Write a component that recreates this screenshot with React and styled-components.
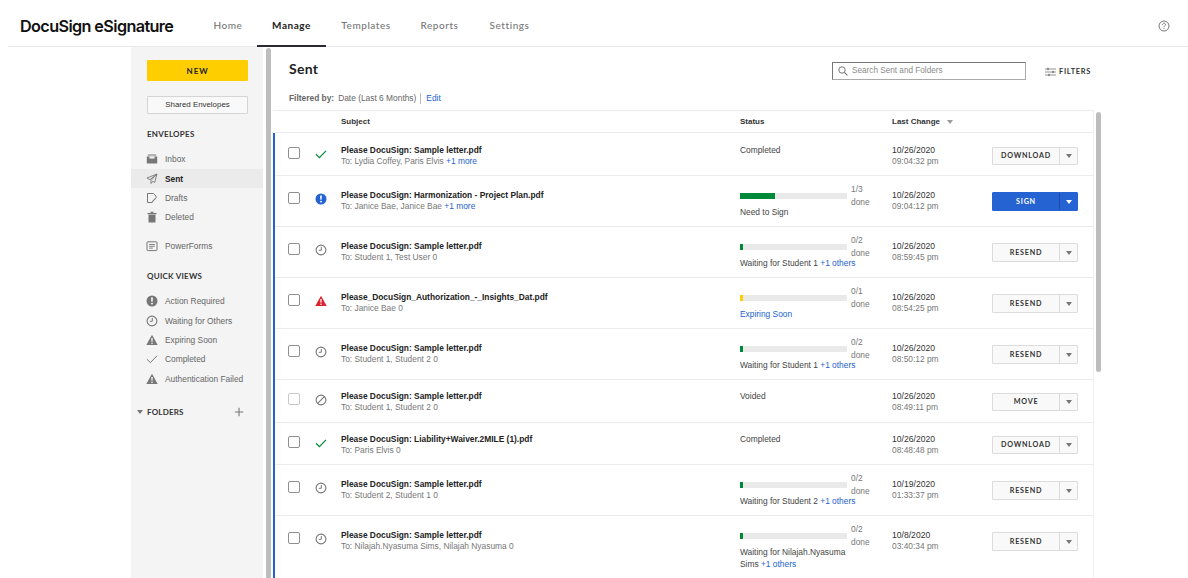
import React from "react";
import styled, { createGlobalStyle } from "styled-components";

const Global = createGlobalStyle`
  html, body { margin: 0; padding: 0; background: #fff; }
  body { font-family: "Liberation Sans", Arial, sans-serif; color: #222; }
  * { box-sizing: border-box; }
`;
const Page = styled.div`height: 578px; overflow: hidden; display: flex; flex-direction: column;`;
const Header = styled.header`
  height: 47px; margin-left: 8px; flex: none; display: flex; align-items: stretch;
  border-bottom: 1px solid #e9e9e9; padding: 0 18px 0 12px; position: relative;
`;
const Logo = styled.div`
  font: 600 16.2px/53px Inter, sans-serif; letter-spacing: -0.6px; color: #111; width: 179px; white-space: nowrap;
  height: 47px;
`;
const NavItem = styled.div`
  height: 47px; margin-bottom: -1px;
  font: ${p => (p.$active ? 700 : 500)} 10px/50px Lato, sans-serif; letter-spacing: 0.55px;
  color: ${p => (p.$active ? "#222" : "#777")};
  border-bottom: 2px solid ${p => (p.$active ? "#2a2a33" : "transparent")};
  width: ${p => p.$w}px; text-align: center; white-space: nowrap;
`;
const Help = styled.div`margin-left: auto; align-self: center; display: flex; margin-top: 5px;`;
const Body = styled.div`flex: 1; display: flex; padding-left: 131px; min-height: 0;`;
const Sidebar = styled.aside`
  width: 132px; flex: none; background: #f4f4f4; padding: 13px 15px 0 16px; position: relative;
`;
const NewBtn = styled.div`
  height: 21px; width: 101px; background: #ffce00; border-radius: 1px; text-align: center;
  font: 700 8px/22px Lato, sans-serif; letter-spacing: 0.9px; color: #222;
`;
const SharedBtn = styled.div`
  height: 18px; width: 101px; margin-top: 15px; background: #f9f9f9; border: 1px solid #d5d5d5; border-radius: 1px;
  text-align: center; font: 400 7.9px/16px "Liberation Sans", sans-serif; color: #333;
`;
const SideHeading = styled.div`
  font: 700 8px/10px Lato, sans-serif; letter-spacing: 0.25px; color: #333; margin-top: ${p => p.$mt}px;
`;
const SideList = styled.div`margin: ${p => p.$mt}px -15px 0 -16px;`;
const SideItem = styled.div`
  height: ${p => p.$h || 19.4}px; display: flex; align-items: center; gap: 7px; padding-left: 15px;
  font: ${p => (p.$active ? 700 : 400)} 8.4px/10px "Liberation Sans", sans-serif;
  color: ${p => (p.$active ? "#222" : "#666")};
  background: ${p => (p.$active ? "#ebebeb" : "transparent")};
  margin-top: ${p => p.$mt || 0}px;
`;
const Folders = styled.div`display: flex; align-items: center; margin: 18.5px 0 0 -10px;`;
const FoldersLabel = styled.span`font: 700 8px/10px Lato, sans-serif; letter-spacing: 0.2px; color: #333; margin-left: 4px;`;
const Plus = styled.span`margin-left: auto; display: flex; margin-right: 4px;`;
const Caret = styled.span`
  width: 0; height: 0; border-left: 3px solid transparent; border-right: 3px solid transparent;
  border-top: 4px solid ${p => p.$c || "#777"}; display: inline-block;
`;
const Scroll = styled.div`width: 5px; background: #bdbdbd; border-radius: 3px; flex: none; margin: ${p => p.$m}; height: ${p => p.$h};`;
const Main = styled.main`width: 821px; flex: none; margin-left: 2px; display: flex; flex-direction: column;`;
const MainTop = styled.div`height: 64px; flex: none; padding: 13px 0 0 16px; border-bottom: 1px solid #ebebeb; position: relative;`;
const TitleRow = styled.div`display: flex; align-items: flex-start;`;
const Title = styled.h1`margin: 0; font: 700 14px/17px Lato, sans-serif; letter-spacing: 0.3px; color: #222;`;
const Search = styled.div`
  margin-left: auto; width: 194px; height: 18px; margin-top: 2px; border: 1px solid #777; border-bottom-color: #aaa; border-right-color: #aaa;
  display: flex; align-items: center; gap: 4px; padding-left: 5px;
  font: 400 8.2px/10px "Liberation Sans", sans-serif; color: #8a8a8a;
`;
const Filters = styled.div`
  width: 68px; margin-top: 4px; padding-left: 19px; height: 16px; display: flex; align-items: center; gap: 3px;
  font: 700 7.4px/10px Lato, sans-serif; letter-spacing: 0.7px; color: #333;
`;
const Filtered = styled.div`margin-top: 13px; display: flex; align-items: center; font: 400 8.4px/11px "Liberation Sans", sans-serif; color: #666;`;
const FilteredLabel = styled.b`font-weight: 700; color: #666; margin-right: 4px;`;
const Edit = styled.a`color: #2463d1; border-left: 1px solid #bbb; margin-left: 4px; padding-left: 5px;`;
const Table = styled.div`flex: 1; border-right: 1px solid #f0f0f0; min-height: 0;`;
const cols = "66px 399px 152px 100px 86px";
const HeadRow = styled.div`
  height: 22px; display: grid; grid-template-columns: ${cols}; margin-left: 2px; align-items: center;
  border-bottom: 1px solid #ebebeb; font: 700 8px/10px "Liberation Sans", sans-serif; color: #333;
`;
const HeadCell = styled.div`grid-column: ${p => p.$col}; display: flex; align-items: center; gap: 7px;`;
const Row = styled.div`
  height: ${p => p.$h}px; display: grid; grid-template-columns: ${cols}; align-items: start;
  border-left: 2px solid #2463d1; padding-top: ${p => p.$pad}px;
  box-shadow: inset 0 -1px 0 #ebebeb;
`;
const Lead = styled.div`display: flex; align-items: center; padding-left: 13px; gap: 15px; margin-top: 1.5px;`;
const Check = styled.span`
  width: 12px; height: 12px; border: 1px solid ${p => (p.$off ? "#c9c9c9" : "#8f8f8f")}; border-radius: 2px; background: #fff; flex: none;
`;
const StateIcon = styled.span`display: flex; width: 12px; height: 12px; margin-top: 2px; flex: none;`;
const Subject = styled.div`font: 700 8.4px/11px "Liberation Sans", sans-serif; color: #222; white-space: nowrap;`;
const Sub = styled.div`font: 400 8.4px/11px "Liberation Sans", sans-serif; color: #777; white-space: nowrap;`;
const Link = styled.a`color: #2463d1;`;
const PlainStatus = styled.div`font: 400 8.4px/11px "Liberation Sans", sans-serif; color: #444;`;
const StatusBox = styled.div`margin-top: -7px; width: 124px;`;
const ProgressLine = styled.div`display: flex; align-items: center;`;
const Track = styled.div`width: 107px; height: 6px; background: #e9e9e9; flex: none;`;
const Fill = styled.div`height: 100%; background: ${p => p.$c};`;
const Count = styled.div`width: 17px; margin-left: 4px; font: 400 8.4px/13px "Liberation Sans", sans-serif; color: #777;`;
const StatusText = styled.div`font: 400 8.4px/12px "Liberation Sans", sans-serif; color: #444; margin-top: -3px; width: 120px;`;
const DateText = styled.div`font: 400 8.6px/11px "Liberation Sans", sans-serif; color: #333;`;
const TimeText = styled.div`font: 400 8.4px/11px "Liberation Sans", sans-serif; color: #777;`;
const Action = styled.div`
  display: flex; width: 86px; height: ${p => (p.$tall ? 19 : 18)}px; margin-top: 2.5px; border-radius: 1px;
  background: ${p => (p.$primary ? "#2463d1" : "#f9f9f9")}; border: 1px solid ${p => (p.$primary ? "#2463d1" : "#dcdcdc")};
`;
const ActionLabel = styled.div`
  flex: 1; text-align: center; font: 700 7.2px/${p => (p.$tall ? 17 : 16)}px Lato, sans-serif; letter-spacing: 0.75px;
  color: ${p => (p.$primary ? "#fff" : "#333")};
`;
const ActionCaret = styled.div`
  width: 18px; display: flex; align-items: center; justify-content: center;
  border-left: 1px solid ${p => (p.$primary ? "#1a4ea8" : "#dcdcdc")};
`;

const S = ({ children, size = 12, vb = "0 0 12 12" }) => (
  <svg width={size} height={size} viewBox={vb} style={{ flex: "none", display: "block" }}>{children}</svg>
);
const Inbox = ({ c = "#777" }) => <S><path d="M2 1.5h8l.5 1H1.5zM.8 3.5h10.4v7H.8z" fill={c} /><path d="M3.5 3.5v2h5v-2" fill="#f4f4f4" /></S>;
const Plane = ({ c = "#777" }) => <S><path d="M11 1 1 5l3 1.7L11 1 5 7.4V10.5l1.7-2.2 2 1.2z" fill="none" stroke={c} strokeWidth=".9" strokeLinejoin="round" /></S>;
const Draft = ({ c = "#777" }) => <S><path d="M6.5 10.5H1.5v-9h6l2.5 2.6V5" fill="none" stroke={c} strokeWidth="1" /><path d="M11 5.5 7 9.8 5.8 10.3l.4-1.4 4-4z" fill={c} /></S>;
const Trash = ({ c = "#777" }) => <S><path d="M1.5 2h9v1.2h-9zM4.5.8h3V2h-3zM2.5 3.8h7v7.7h-7z" fill={c} /></S>;
const Form = ({ c = "#777" }) => <S><rect x="1" y="1.8" width="10" height="8.8" rx=".8" fill="none" stroke={c} /><path d="M3.2 4.5h5.6M3.2 6.3h5.6M3.2 8.1h3.6" stroke={c} strokeWidth=".9" /></S>;
const Alert = ({ c = "#777" }) => <S><circle cx="6" cy="6" r="5.5" fill={c} /><path d="M5.1 2.6h1.8l-.3 4.2H5.4z" fill="#fff" /><circle cx="6" cy="8.6" r=".95" fill="#fff" /></S>;
const Clock = ({ c = "#777" }) => <S><circle cx="6" cy="6" r="4.9" fill="none" stroke={c} strokeWidth="1.1" /><path d="M6.3 2.9v3.4H3.8" fill="none" stroke={c} strokeWidth="1" /></S>;
const Warn = ({ c = "#777" }) => <S><path d="M6 .7 11.7 11H.3z" fill={c} /><path d="M5.3 4h1.4l-.2 3.8h-1z" fill="#fff" /><circle cx="6" cy="9.2" r=".75" fill="#fff" /></S>;
const Tick = ({ c = "#777", w = 1 }) => <S><path d="M1 6.3 4.4 9.6 11 2.8" fill="none" stroke={c} strokeWidth={w} /></S>;
const Void = ({ c = "#777" }) => <S><circle cx="6" cy="6" r="4.9" fill="none" stroke={c} strokeWidth="1.1" /><path d="M2.6 9.4 9.4 2.6" stroke={c} strokeWidth="1.1" /></S>;

const side1 = [["Inbox", Inbox], ["Sent", Plane, true], ["Drafts", Draft], ["Deleted", Trash]];
const side2 = [["Action Required", Alert], ["Waiting for Others", Clock], ["Expiring Soon", Warn], ["Completed", Tick], ["Authentication Failed", Warn]];

const rows = [
  { h: 43, pad: 11.5, icon: <Tick c="#008938" w={1.2} />, subject: "Please DocuSign: Sample letter.pdf", to: "To: Lydia Coffey, Paris Elvis", more: "+1 more", plain: "Completed", date: "10/26/2020", time: "09:04:32 pm", action: "DOWNLOAD" },
  { h: 51, pad: 13.5, tall: true, icon: <Alert c="#2463d1" />, subject: "Please DocuSign: Harmonization - Project Plan.pdf", to: "To: Janice Bae, Janice Bae", more: "+1 more", pct: 33, color: "#008938", count: "1/3", status: "Need to Sign", date: "10/26/2020", time: "09:04:12 pm", action: "SIGN", primary: true },
  { h: 51, pad: 13.5, tall: true, icon: <Clock />, subject: "Please DocuSign: Sample letter.pdf", to: "To: Student 1, Test User 0", pct: 3, color: "#008938", count: "0/2", status: "Waiting for Student 1", others: "+1 others", date: "10/26/2020", time: "08:59:45 pm", action: "RESEND" },
  { h: 51, pad: 13.5, tall: true, icon: <Warn c="#d9232e" />, subject: "Please_DocuSign_Authorization_-_Insights_Dat.pdf", to: "To: Janice Bae 0", pct: 3, color: "#ffce00", count: "0/1", expiring: true, date: "10/26/2020", time: "08:54:25 pm", action: "RESEND" },
  { h: 51, pad: 13.5, tall: true, icon: <Clock />, subject: "Please DocuSign: Sample letter.pdf", to: "To: Student 1, Student 2 0", pct: 3, color: "#008938", count: "0/2", status: "Waiting for Student 1", others: "+1 others", date: "10/26/2020", time: "08:50:12 pm", action: "RESEND" },
  { h: 43, pad: 10.5, off: true, icon: <Void />, subject: "Please DocuSign: Sample letter.pdf", to: "To: Student 1, Student 2 0", plain: "Voided", date: "10/26/2020", time: "08:49:11 pm", action: "MOVE" },
  { h: 42, pad: 10.5, icon: <Tick c="#008938" w={1.2} />, subject: "Please DocuSign: Liability+Waiver.2MILE (1).pdf", to: "To: Paris Elvis 0", plain: "Completed", date: "10/26/2020", time: "08:48:48 pm", action: "DOWNLOAD" },
  { h: 51, pad: 13.5, tall: true, icon: <Clock />, subject: "Please DocuSign: Sample letter.pdf", to: "To: Student 2, Student 1 0", pct: 3, color: "#008938", count: "0/2", status: "Waiting for Student 2", others: "+1 others", date: "10/19/2020", time: "01:33:37 pm", action: "RESEND" },
  { h: 64, pad: 13.5, tall: true, icon: <Clock />, subject: "Please DocuSign: Sample letter.pdf", to: "To: Nilajah.Nyasuma Sims, Nilajah Nyasuma 0", pct: 3, color: "#008938", count: "0/2", status: "Waiting for Nilajah.Nyasuma Sims", others: "+1 others", date: "10/8/2020", time: "03:40:34 pm", action: "RESEND" },
];

export default function App() {
  return (
    <Page>
      <Global />
      <Header>
        <Logo>DocuSign eSignature</Logo>
        <NavItem $w={58}>Home</NavItem>
        <NavItem $w={69} $active>Manage</NavItem>
        <NavItem $w={80}>Templates</NavItem>
        <NavItem $w={67}>Reports</NavItem>
        <NavItem $w={73}>Settings</NavItem>
        <Help>
          <svg width="12" height="12" viewBox="0 0 12 12">
            <circle cx="6" cy="6" r="5" fill="none" stroke="#666" strokeWidth=".9" />
            <path d="M4.5 4.8c0-2 3-2 3-.2 0 1.2-1.5 1.1-1.5 2.5" fill="none" stroke="#666" strokeWidth=".9" />
            <circle cx="6" cy="8.5" r=".6" fill="#666" />
          </svg>
        </Help>
      </Header>
      <Body>
        <Sidebar>
          <NewBtn>NEW</NewBtn>
          <SharedBtn>Shared Envelopes</SharedBtn>
          <SideHeading $mt={15}>ENVELOPES</SideHeading>
          <SideList $mt={10.5}>
            {side1.map(([t, I, a]) => <SideItem key={t} $active={a}><I />{t}</SideItem>)}
            <SideItem $mt={9}><Form />PowerForms</SideItem>
          </SideList>
          <SideHeading $mt={16}>QUICK VIEWS</SideHeading>
          <SideList $mt={10}>
            {side2.map(([t, I]) => <SideItem key={t}><I />{t}</SideItem>)}
          </SideList>
          <Folders>
            <Caret />
            <FoldersLabel>FOLDERS</FoldersLabel>
            <Plus><svg width="10" height="10" viewBox="0 0 10 10"><path d="M5 .8v8.4M.8 5h8.4" stroke="#777" strokeWidth="1.1" /></svg></Plus>
          </Folders>
        </Sidebar>
        <Scroll $m="1px 0 0 3px" $h="100%" />
        <Main>
          <MainTop>
            <TitleRow>
              <Title>Sent</Title>
              <Search>
                <svg width="10" height="10" viewBox="0 0 10 10"><circle cx="4" cy="4" r="3.2" fill="none" stroke="#777" /><path d="M6.4 6.4 9.4 9.4" stroke="#777" strokeWidth="1.1" /></svg>
                Search Sent and Folders
              </Search>
              <Filters>
                <svg width="11" height="10" viewBox="0 0 11 10"><path d="M0 2h11M0 5h11M0 8h11" stroke="#777" strokeWidth=".8" /><path d="M3 .8v2.4M8 3.8v2.4M4 6.8v2.4" stroke="#555" strokeWidth="1" /></svg>
                FILTERS
              </Filters>
            </TitleRow>
            <Filtered><FilteredLabel>Filtered by:</FilteredLabel>Date (Last 6 Months)<Edit>Edit</Edit></Filtered>
          </MainTop>
          <Table>
            <HeadRow>
              <HeadCell $col={2}>Subject</HeadCell>
              <HeadCell $col={3}>Status</HeadCell>
              <HeadCell $col={4}>Last Change <Caret $c="#999" /></HeadCell>
            </HeadRow>
            {rows.map((r, i) => (
              <Row key={i} $h={r.h} $pad={r.pad}>
                <Lead><Check $off={r.off} /><StateIcon>{r.icon}</StateIcon></Lead>
                <div>
                  <Subject>{r.subject}</Subject>
                  <Sub>{r.to}{r.more && <> <Link>{r.more}</Link></>}</Sub>
                </div>
                {r.plain ? <PlainStatus>{r.plain}</PlainStatus> : (
                  <StatusBox>
                    <ProgressLine>
                      <Track><Fill $c={r.color} style={{ width: `${r.pct}%` }} /></Track>
                      <Count>{r.count} done</Count>
                    </ProgressLine>
                    <StatusText>
                      {r.expiring ? <Link>Expiring Soon</Link> : <>{r.status}{r.others && <> <Link>{r.others}</Link></>}</>}
                    </StatusText>
                  </StatusBox>
                )}
                <div>
                  <DateText>{r.date}</DateText>
                  <TimeText>{r.time}</TimeText>
                </div>
                <Action $primary={r.primary} $tall={r.tall}>
                  <ActionLabel $primary={r.primary} $tall={r.tall}>{r.action}</ActionLabel>
                  <ActionCaret $primary={r.primary}><Caret $c={r.primary ? "#fff" : "#777"} /></ActionCaret>
                </Action>
              </Row>
            ))}
          </Table>
        </Main>
        <Scroll $m="65px 0 0 2px" $h="260px" />
      </Body>
    </Page>
  );
}
